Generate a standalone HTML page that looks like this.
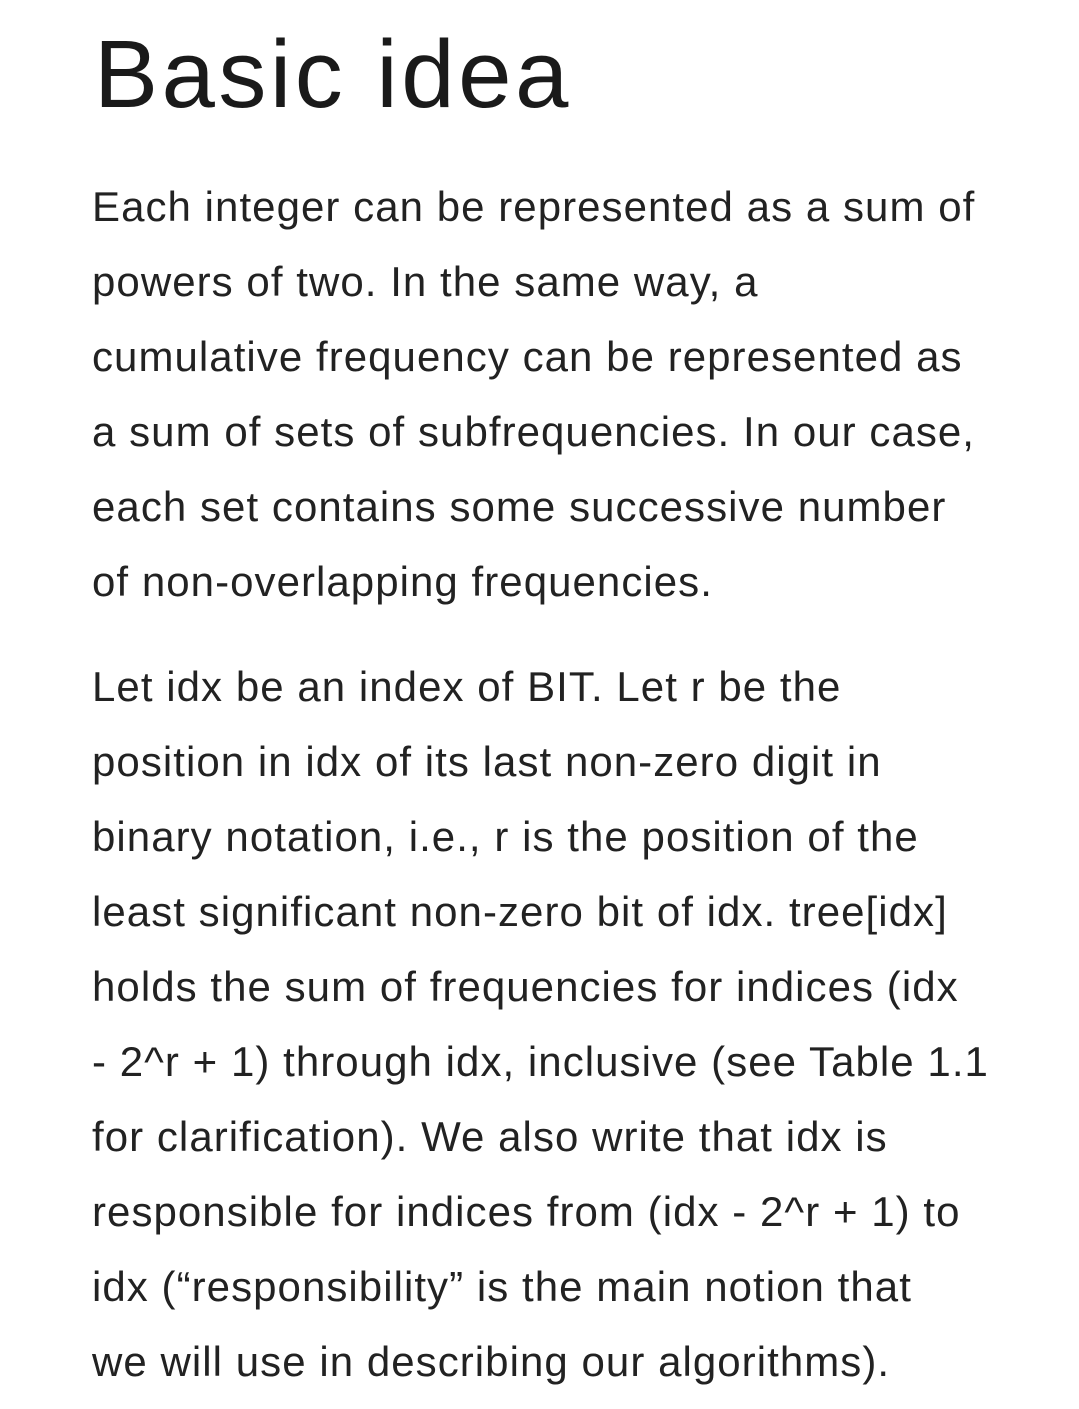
<!DOCTYPE html>
<html><head><meta charset="utf-8"><style>
html,body{margin:0;padding:0;background:#fff;width:1079px;height:1409px;overflow:hidden}
body{font-family:"Liberation Sans",sans-serif;color:#222}
h1{position:absolute;left:94px;top:20px;margin:0;font-size:96px;font-weight:300;line-height:110px;color:#1a1a1a;letter-spacing:3.5px}
.p{position:absolute;left:92px;font-size:42px;line-height:75px;white-space:nowrap;color:#222;letter-spacing:1.05px}
</style></head><body>
<h1>Basic idea</h1>
<div class="p" style="top:169px">Each integer can be represented as a sum of<br>powers of two. In the same way, a<br>cumulative frequency can be represented as<br>a sum of sets of subfrequencies. In our case,<br>each set contains some successive number<br>of non-overlapping frequencies.</div>
<div class="p" style="top:649px">Let idx be an index of BIT. Let r be the<br>position in idx of its last non-zero digit in<br>binary notation, i.e., r is the position of the<br>least significant non-zero bit of idx. tree[idx]<br>holds the sum of frequencies for indices (idx<br>- 2^r + 1) through idx, inclusive (see Table 1.1<br>for clarification). We also write that idx is<br>responsible for indices from (idx - 2^r + 1) to<br>idx (“responsibility” is the main notion that<br>we will use in describing our algorithms).</div>
</body></html>
